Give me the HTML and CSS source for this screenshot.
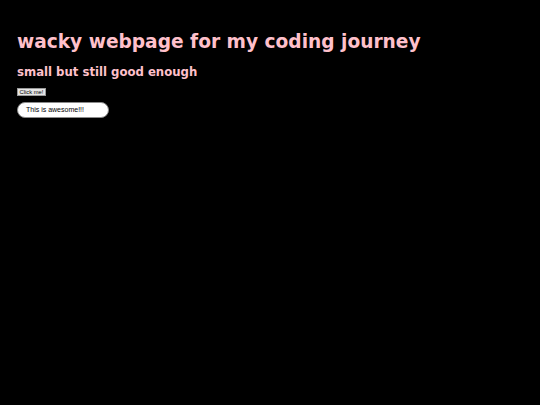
FILE: index.html
```html
<!DOCTYPE html>
<html lang="en">
<head>
<meta charset="utf-8">
<title>wacky webpage</title>
<link rel="stylesheet" href="styles.css">
</head>
<body>
<main class="page">
  <h1 class="title">wacky webpage for my coding journey</h1>
  <h2 class="subtitle">small but still good enough</h2>
  <button class="click-btn" type="button">Click me!</button>
  <div class="awesome">This is awesome!!!</div>
</main>
</body>
</html>
```

FILE: styles.css
```css
html, body {
  margin: 0;
  padding: 0;
  background: #000;
}

.page {
  padding: 30px 17px;
  display: flex;
  flex-direction: column;
  align-items: flex-start;
}

.title,
.subtitle {
  margin: 0;
  font-family: "DejaVu Sans", Verdana, sans-serif;
  font-weight: bold;
  color: #ffc0cb;
}

.title {
  font-size: 18.6px;
  line-height: 24px;
}

.subtitle {
  margin-top: 10px;
  font-size: 11.7px;
  line-height: 16px;
}

.click-btn {
  box-sizing: border-box;
  margin: 8px 0 0;
  padding: 0;
  width: 29px;
  height: 8px;
  font-family: "Liberation Sans", Arial, sans-serif;
  font-size: 5.8px;
  line-height: 6px;
  color: #000;
  background: #e6e6e6;
  border: 1px solid #9a9a9a;
  border-radius: 0;
}

.awesome {
  box-sizing: border-box;
  margin-top: 6px;
  width: 92px;
  height: 16px;
  padding: 0 0 0 8px;
  font-family: "Liberation Sans", Arial, sans-serif;
  font-size: 7px;
  line-height: 14px;
  color: #000;
  background: #fff;
  border: 1px solid #8a8a8a;
  border-radius: 8px;
}
```
